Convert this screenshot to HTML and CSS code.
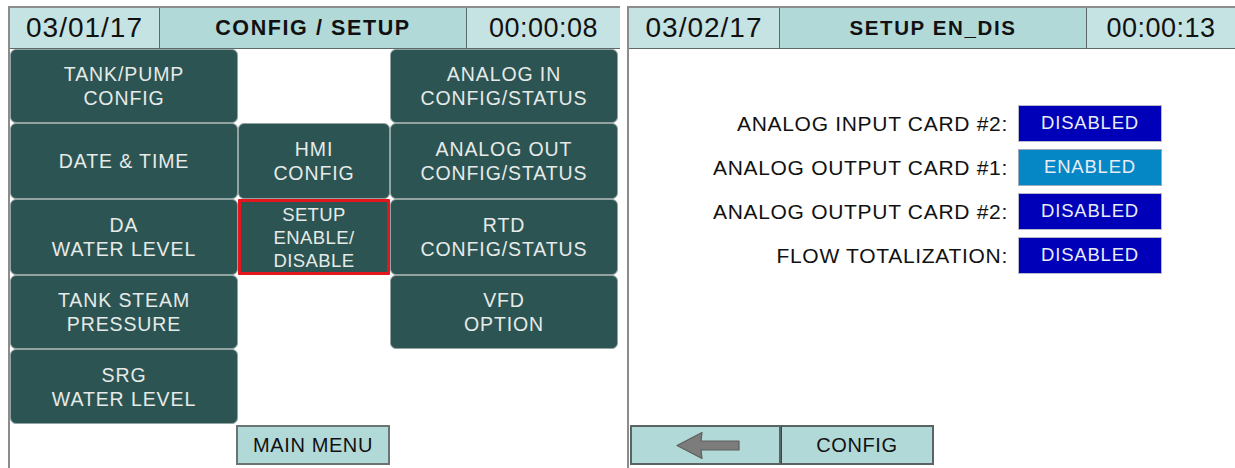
FILE: index.html
```html
<!DOCTYPE html>
<html>
<head>
<meta charset="utf-8">
<link rel="stylesheet" href="styles.css">
</head>
<body>
<div class="screens">
  <section class="panel left">
    <header class="hdr">
      <div class="cell date">03/01/17</div>
      <div class="cell title">CONFIG / SETUP</div>
      <div class="cell time">00:00:08</div>
    </header>
    <div class="menu">
      <div class="btn c1 r1">TANK/PUMP<br>CONFIG</div>
      <div class="btn c1 r2">DATE &amp; TIME</div>
      <div class="btn c1 r3">DA<br>WATER LEVEL</div>
      <div class="btn c1 r4">TANK STEAM<br>PRESSURE</div>
      <div class="btn c1 r5">SRG<br>WATER LEVEL</div>
      <div class="btn c2 r2">HMI<br>CONFIG</div>
      <div class="btn c2 r3 selected">SETUP<br>ENABLE/<br>DISABLE</div>
      <div class="btn c3 r1">ANALOG IN<br>CONFIG/STATUS</div>
      <div class="btn c3 r2">ANALOG OUT<br>CONFIG/STATUS</div>
      <div class="btn c3 r3">RTD<br>CONFIG/STATUS</div>
      <div class="btn c3 r4">VFD<br>OPTION</div>
      <div class="mainmenu">MAIN MENU</div>
    </div>
  </section>
  <section class="panel right">
    <header class="hdr">
      <div class="cell date d2">03/02/17</div>
      <div class="cell title t2title">SETUP EN_DIS</div>
      <div class="cell time t2">00:00:13</div>
    </header>
    <div class="setup">
      <div class="row"><span class="lbl">ANALOG INPUT CARD #2:</span><span class="val off">DISABLED</span></div>
      <div class="row"><span class="lbl">ANALOG OUTPUT CARD #1:</span><span class="val on">ENABLED</span></div>
      <div class="row"><span class="lbl">ANALOG OUTPUT CARD #2:</span><span class="val off">DISABLED</span></div>
      <div class="row"><span class="lbl">FLOW TOTALIZATION:</span><span class="val off">DISABLED</span></div>
    </div>
    <div class="bottom">
      <div class="nav back">
        <svg width="64" height="29" viewBox="0 0 64 29"><polygon points="1,14.5 26,1.5 25,10 63,10 63,19 25,19 26,27.5" fill="#7c7c7c" stroke="#5e5e5e" stroke-width="1.2" stroke-linejoin="round"/></svg>
      </div>
      <div class="nav">CONFIG</div>
    </div>
  </section>
</div>
</body>
</html>
```

FILE: styles.css
```css
* { box-sizing: border-box; }
html, body { margin: 0; padding: 0; background: #fff; }
body { font-family: "Liberation Sans", Arial, sans-serif; width: 1235px; height: 468px; overflow: hidden; }

.screens { display: flex; gap: 7px; padding-left: 8px; padding-top: 6px; }

.panel { border-top: 2px solid #8c8c8c; border-left: 2px solid #8c8c8c; height: 470px; }
.panel.left { width: 612px; }
.panel.right { width: 608px; }

.hdr { display: flex; height: 41px; border-bottom: 1px solid #5e6a6a; }
.cell { display: flex; align-items: center; justify-content: center; height: 40px; color: #111; }
.date { width: 150px; background: #c6e3e3; font-size: 28px; letter-spacing: 1px; border-right: 1px solid #5e6a6a; }
.d2 { width: 151px; }
.title { width: 307px; background: #b1d9d8; font-size: 21.5px; font-weight: bold; letter-spacing: 1.6px; border-right: 1px solid #5e6a6a; }
.t2title { font-size: 20.5px; letter-spacing: 1.6px; }
.time { width: 153px; background: #c6e3e3; font-size: 27px; letter-spacing: 0.5px; }
.t2 { width: 148px; }

.menu {
  display: grid;
  grid-template-columns: 228px 152px 228px;
  grid-template-rows: 74px 76px 76px 74px 75px 42px;
}
.btn {
  background: #2c5452;
  color: #e6eae8;
  border: 1px solid #93a3a1;
  border-radius: 6px;
  display: flex; align-items: center; justify-content: center;
  text-align: center;
  font-size: 19.5px; line-height: 24px; letter-spacing: 0.9px;
}
.c1 { grid-column: 1; }
.c2 { grid-column: 2; }
.c3 { grid-column: 3; }
.r1 { grid-row: 1; }
.r2 { grid-row: 2; }
.r3 { grid-row: 3; }
.r4 { grid-row: 4; }
.r5 { grid-row: 5; }
.btn.selected { border: 3px solid #e3161d; border-radius: 1px; line-height: 23px; font-size: 18.5px; letter-spacing: 0.4px; padding-top: 1px; }

.mainmenu {
  grid-column: 2; grid-row: 6;
  margin: 1px 0 1px -2px;
  height: 40px;
  background: #b1d9d8;
  border: 2px solid #6b7373;
  display: flex; align-items: center; justify-content: center;
  font-size: 20px; letter-spacing: 0.6px; color: #111;
}

.setup { height: 376px; padding-top: 56px; padding-right: 73px; display: flex; flex-direction: column; gap: 7px; }
.row { display: flex; justify-content: flex-end; align-items: center; gap: 10px; height: 37px; }
.lbl { font-size: 21px; letter-spacing: 0.7px; color: #111; }
.val { width: 144px; height: 37px; display: flex; align-items: center; justify-content: center; color: #e8ecf5; font-size: 18.5px; letter-spacing: 0.8px; padding-bottom: 2px; border: 1px solid #b8b8c8; }
.val.off { background: #0000b8; }
.val.on { background: #0687c5; border-color: #9ab; }

.bottom { display: flex; margin-left: 1px; }
.nav {
  width: 151px; height: 40px;
  background: #b1d9d8;
  border: 2px solid #5b6464;
  display: flex; align-items: center; justify-content: center;
  font-size: 20px; letter-spacing: 0.6px; color: #111;
}
.nav + .nav { width: 153px; border-left: 1px solid #444; }
.nav.back { padding-left: 4px; }
```
